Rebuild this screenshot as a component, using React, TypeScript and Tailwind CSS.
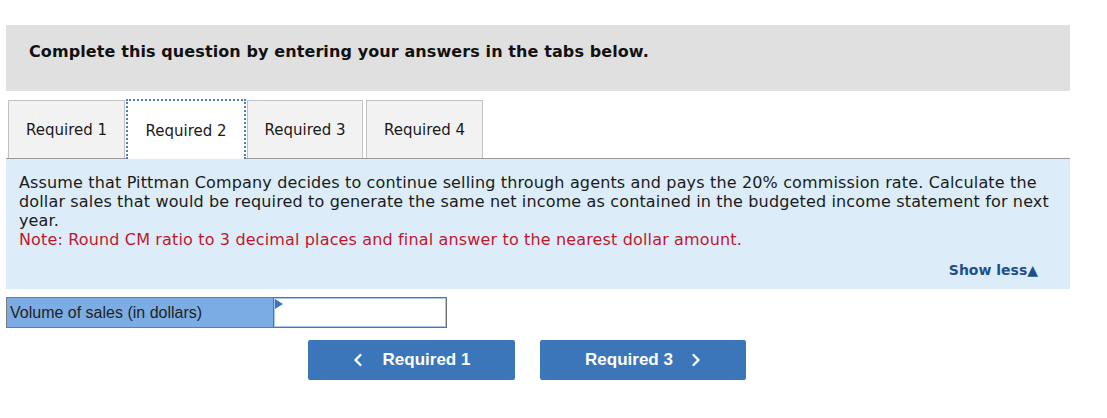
import React from 'react'

const tabs = ['Required 1', 'Required 2', 'Required 3', 'Required 4']

const Chevron = ({ dir }: { dir: 'left' | 'right' }) => (
  <svg width="10" height="14" viewBox="0 0 10 14" fill="none">
    <path
      d={dir === 'left' ? 'M7.5 2 L2.5 7 L7.5 12' : 'M2.5 2 L7.5 7 L2.5 12'}
      stroke="white"
      strokeWidth="2.4"
      strokeLinecap="round"
      strokeLinejoin="round"
    />
  </svg>
)

export default function App() {
  return (
    <div className="w-[1107px] h-[418px] bg-white pt-[25px] pl-[6px] text-[#1a1a1a] font-['DejaVu_Sans',Verdana,sans-serif]">
      {/* heading */}
      <div className="w-[1064px] h-[66px] bg-[#e0e0e0] pl-[23px] pt-[15px]">
        <span className="text-[16px] leading-[20px] font-bold text-[#111] tracking-[0.1px]">
          Complete this question by entering your answers in the tabs below.
        </span>
      </div>

      {/* tabs */}
      <div className="w-[1064px] mt-[8px] flex items-end border-b border-[#9a9a9a] pl-[2px]">
        {tabs.map((t, i) => {
          const active = i === 1
          return (
            <div
              key={t}
              className={
                active
                  ? 'w-[120px] h-[60px] -mb-px bg-white border-2 border-b-0 border-dotted border-[#4a7fc1] flex items-center justify-center text-[15px] ml-px'
                  : `h-[58px] bg-[#f2f2f2] border border-b-0 border-[#c2c2c2] flex items-center justify-center text-[15px] ${
                      i === 0 ? 'w-[117px]' : i === 2 ? 'w-[116px] ml-px' : 'w-[117px] ml-[3px]'
                    }`
              }
            >
              <span className="pt-[2px]">{t}</span>
            </div>
          )
        })}
      </div>

      {/* question panel */}
      <div className="w-[1064px] h-[130px] bg-[#dcedf9] pt-[14px] pl-[13px] pr-[12px] flex flex-col">
        <p className="text-[16px] leading-[19px] tracking-[0.15px]">
          Assume that Pittman Company decides to continue selling through agents and pays the 20% commission rate. Calculate the dollar sales that would be required to generate the same net income as contained in the budgeted income statement for next year.
        </p>
        <p className="text-[16px] leading-[19px] tracking-[0.15px] text-[#c0172e]">
          Note: Round CM ratio to 3 decimal places and final answer to the nearest dollar amount.
        </p>
        <div className="mt-[12px] pr-[20px] flex justify-end">
          <span className="text-[14px] leading-[18px] font-bold text-[#1f4f8b]">Show less▲</span>
        </div>
      </div>

      {/* answer row */}
      <div className="mt-[8px] flex font-['Liberation_Sans',Arial,sans-serif]">
        <div className="w-[268px] h-[31px] bg-[#7badE4] border border-[#7a7a7a] flex items-center pl-[3px] text-[16px] text-[#222]">
          Volume of sales (in dollars)
        </div>
        <div className="relative w-[174px] h-[31px] border border-[#6f6f6f] -ml-px">
          <div className="absolute inset-0 border border-[#a9c6ec] bg-white" />
          <div className="absolute left-[1px] top-[1px] w-0 h-0 border-t-[5px] border-b-[5px] border-l-[8px] border-t-transparent border-b-transparent border-l-[#3a76b9]" />
        </div>
      </div>

      {/* navigation */}
      <div className="mt-[12px] ml-[302px] flex gap-[25px] font-['Liberation_Sans',Arial,sans-serif]">
        <button className="w-[207px] h-[40px] bg-[#3a76b9] rounded-[2px] flex items-center justify-center gap-[20px] text-white text-[17px] font-bold">
          <Chevron dir="left" />
          <span>Required 1</span>
        </button>
        <button className="w-[206px] h-[40px] bg-[#3a76b9] rounded-[2px] flex items-center justify-center gap-[18px] text-white text-[17px] font-bold">
          <span>Required 3</span>
          <Chevron dir="right" />
        </button>
      </div>
    </div>
  )
}
